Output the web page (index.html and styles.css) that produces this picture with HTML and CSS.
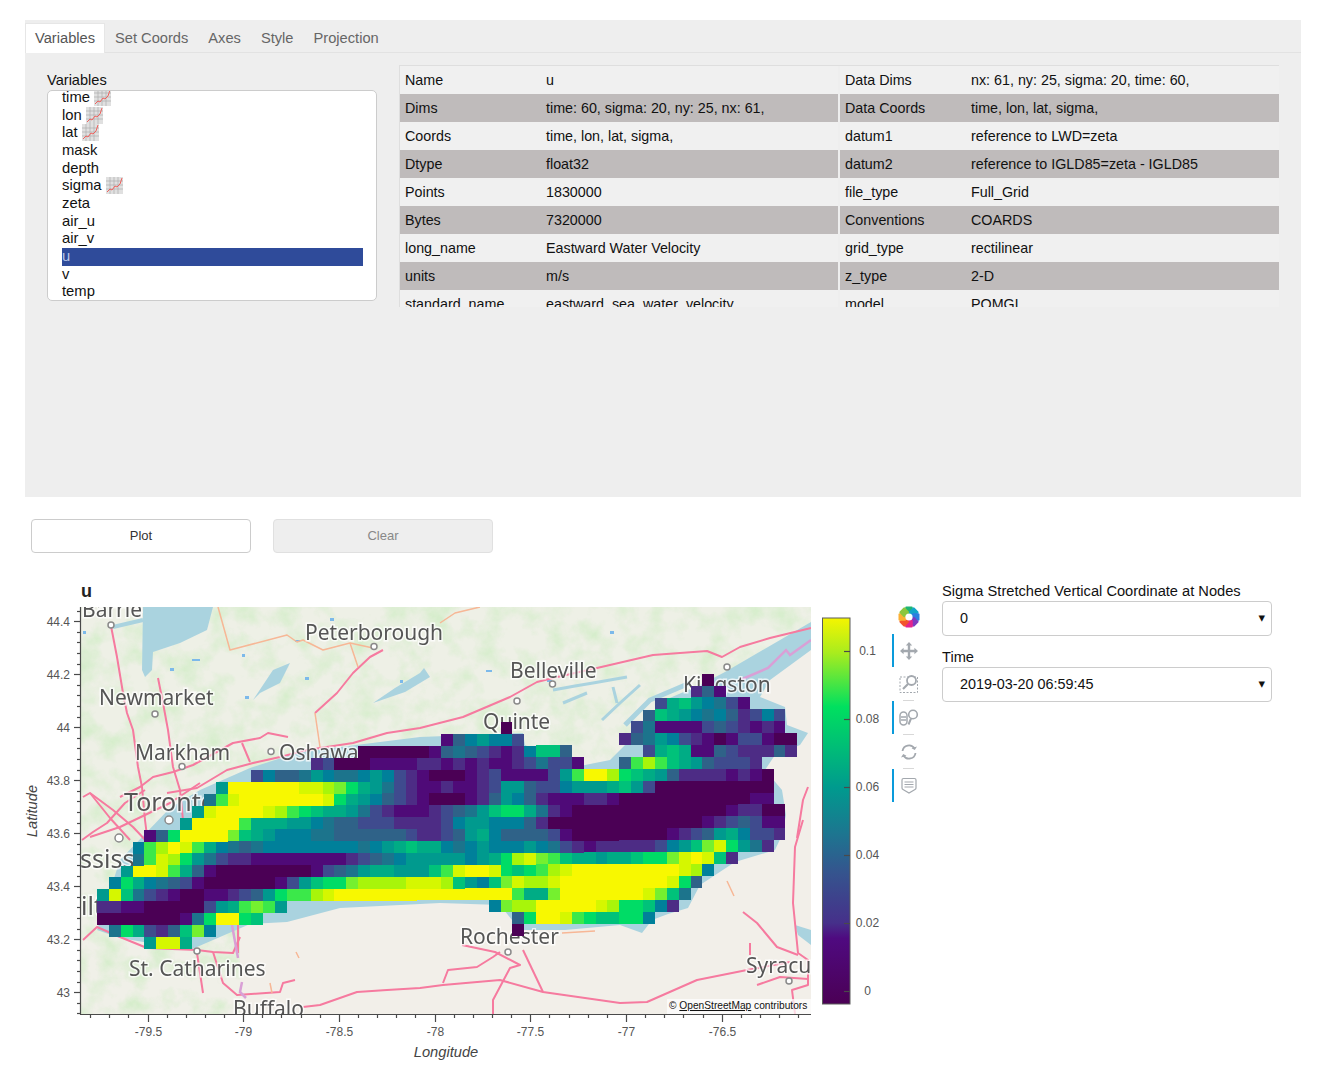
FILE: index.html
```html
<!DOCTYPE html>
<html lang="en">
<head>
  <meta charset="UTF-8">
  <meta name="viewport" content="width=device-width, initial-scale=1">
  <title>Psy View</title>
  <link rel="stylesheet" href="styles.css">
</head>

<body>

  <svg class="defs" width="0" height="0">
    <symbol id="chart" viewBox="0 0 17 17">
      <rect width="17" height="17" fill="#e0e0e0"/>
      <path d="M0 4h17M0 8h17M0 12h17M4 0v17M8 0v17M12 0v17" stroke="#adadad" stroke-width="0.7"/>
      <path d="M1 15l3-3 2 1 3-4 2 1 3-3 2-6" fill="none" stroke="#f0605c" stroke-width="1"/>
    </symbol>
  </svg>

  <div class="panel">
    <div class="tabs">
      <div class="tab active">Variables</div>
      <div class="tab">Set Coords</div>
      <div class="tab">Axes</div>
      <div class="tab">Style</div>
      <div class="tab">Projection</div>
    </div>

    <div class="panel-body">
      <div class="var-box">
        <div class="var-label">Variables</div>
        <div class="var-list">
          <ul>
            <li>time <svg class="chart"><use href="#chart"/></svg></li>
            <li>lon <svg class="chart"><use href="#chart"/></svg></li>
            <li>lat <svg class="chart"><use href="#chart"/></svg></li>
            <li>mask</li>
            <li>depth</li>
            <li>sigma <svg class="chart"><use href="#chart"/></svg></li>
            <li>zeta</li>
            <li>air_u</li>
            <li>air_v</li>
            <li class="selected">u</li>
            <li>v</li>
            <li>temp</li>
          </ul>
        </div>
      </div>

      <div class="info">
        <table class="info-left">
          <tr><td class="key">Name</td><td>u</td></tr>
          <tr><td class="key">Dims</td><td>time: 60, sigma: 20, ny: 25, nx: 61,</td></tr>
          <tr><td class="key">Coords</td><td>time, lon, lat, sigma,</td></tr>
          <tr><td class="key">Dtype</td><td>float32</td></tr>
          <tr><td class="key">Points</td><td>1830000</td></tr>
          <tr><td class="key">Bytes</td><td>7320000</td></tr>
          <tr><td class="key">long_name</td><td>Eastward Water Velocity</td></tr>
          <tr><td class="key">units</td><td>m/s</td></tr>
          <tr><td class="key">standard_name</td><td>eastward_sea_water_velocity</td></tr>
        </table>
        <table class="info-right">
          <tr><td class="key">Data Dims</td><td>nx: 61, ny: 25, sigma: 20, time: 60,</td></tr>
          <tr><td class="key">Data Coords</td><td>time, lon, lat, sigma,</td></tr>
          <tr><td class="key">datum1</td><td>reference to LWD=zeta</td></tr>
          <tr><td class="key">datum2</td><td>reference to IGLD85=zeta - IGLD85</td></tr>
          <tr><td class="key">file_type</td><td>Full_Grid</td></tr>
          <tr><td class="key">Conventions</td><td>COARDS</td></tr>
          <tr><td class="key">grid_type</td><td>rectilinear</td></tr>
          <tr><td class="key">z_type</td><td>2-D</td></tr>
          <tr><td class="key">model</td><td>POMGL</td></tr>
        </table>
      </div>
    </div>
  </div>

  <div class="buttons">
    <div class="btn">Plot</div>
    <div class="btn disabled">Clear</div>
  </div>

  <div class="plot-row">
    <svg class="plot" width="892" height="501" viewBox="0 578 892 501">
      <defs>
        <clipPath id="mapClip"><rect x="81" y="607" width="730" height="407"/></clipPath>
        <filter id="mottle" x="0" y="0" width="100%" height="100%" color-interpolation-filters="sRGB">
          <feTurbulence type="fractalNoise" baseFrequency="0.04" numOctaves="4" seed="7"/>
          <feColorMatrix type="matrix" values="0 0 0 0 0.84  0 0 0 0 0.93  0 0 0 0 0.80  2.4 0 0 0 -1"/>
          <feComposite in2="SourceGraphic" operator="in"/>
          <feMerge><feMergeNode in="SourceGraphic"/><feMergeNode/></feMerge>
        </filter>
        <filter id="soft"><feGaussianBlur stdDeviation="0.45"/></filter>
        <linearGradient id="cbar" x1="0" y1="0" x2="0" y2="1">
          <stop offset="0" stop-color="#f5f500"/>
          <stop offset="0.09" stop-color="#a9ec1e"/>
          <stop offset="0.23" stop-color="#00e05f"/>
          <stop offset="0.44" stop-color="#009a8e"/>
          <stop offset="0.56" stop-color="#1d7590"/>
          <stop offset="0.66" stop-color="#35548e"/>
          <stop offset="0.79" stop-color="#46308a"/>
          <stop offset="0.83" stop-color="#4f0a80"/>
          <stop offset="1" stop-color="#4b0055"/>
        </linearGradient>
      </defs>

      <text class="plot-title" x="81" y="597">u</text>

      <g clip-path="url(#mapClip)">
        <rect x="81" y="607" width="730" height="407" fill="#f2efe9"/>

        <!-- canadian side, greener than the us side -->
        <path filter="url(#mottle)" fill="#eef0e6" d="M81 607H811V640L770 680 760 700 640 760 81 960V607Z"/>
        <path filter="url(#mottle)" fill="#f0f0e8" d="M81 920L240 920 240 1014 81 1014Z"/>

        <!-- water -->
        <path fill="#aad3df" d="M97 930L120 860 170 808 200 790 250 768 300 752 420 737 523 733 525 745 570 768 610 760 625 745 650 725 665 700 700 685 725 672 811 622V650L770 680 760 697 785 707 787 725 808 733 800 745 775 755 765 770 782 790 786 815 782 835 775 850 735 862 700 885 688 908 668 914 652 920 642 933 620 925 565 930 520 930 500 905 440 903 340 908 287 922 250 924 190 950 120 938Z"/>
        <path fill="#aad3df" d="M143 607H213L207 630 180 643 153 652 152 670 145 677 142 670Z"/>
        <path fill="none" stroke="#aad3df" stroke-width="4" d="M113 627L143 620"/>
        <path fill="#aad3df" d="M253 700L273 670 290 663 280 683 260 693Z"/>
        <path fill="#aad3df" d="M373 703L395 688 420 673 424 668 430 677 405 692Z"/>
        <g fill="none" stroke="#aad3df">
          <path stroke-width="3" d="M553 690L575 686 593 683 627 677M563 703L587 693M613 687L617 703M602 720L620 703 640 685"/>
          <path stroke-width="5" d="M625 725L650 700 690 683"/>
        </g>
        <path fill="#aad3df" d="M795 925L811 930V945L798 935Z"/>
        <path fill="#7cb9ea" d="M192 659h8v2h-8ZM170 668h4v3h-4ZM330 618h4v3h-4ZM486 670h6v2h-6ZM610 631h4v3h-4ZM242 654h3v3h-3ZM305 677h4v3h-4ZM547 680h5v2h-5ZM83 631h3v3h-3ZM245 696h4v3h-4ZM400 680h3v3h-3ZM295 640h5v2h-5Z"/>

        <!-- roads -->
        <g fill="none" stroke="#f67a9f" stroke-width="2" stroke-linejoin="round" filter="url(#soft)">
          <path d="M111 626L117 657 123 693 127 713 133 730 138 767 142 787 145 820 150 860"/>
          <path d="M158 678L163 703 168 730 173 767 180 790 183 820"/>
          <path d="M83 797L90 793 110 818 130 840"/>
          <path d="M120 797L140 787 153 777 173 772 193 765 233 743 260 738 268 733 288 737"/>
          <path d="M167 793L197 788 227 770 253 763 280 757 307 750 353 743 387 733 420 728 463 717 510 697 537 682 553 678 597 668 653 655 707 651 722 657 740 647 770 638 811 628"/>
          <path d="M315 713L337 693 353 673 370 657 383 650"/>
          <path d="M82 840L93 832 107 823 125 803 145 790"/>
          <path d="M90 837L120 827 170 803 200 783"/>
          <path d="M90 793L113 810 133 827 150 845"/>
          <path d="M83 940L97 927 120 937 147 948 197 950 213 952 233 953 240 937"/>
          <path d="M197 953L203 993"/>
          <path d="M213 952L223 983 237 995 280 992 283 983 295 980"/>
          <path d="M238 923V953"/>
          <path d="M303 1007L320 1005 357 992 387 990 420 988 443 985 500 980 543 992 620 1003 647 1002 697 980 747 970 790 962"/>
          <path d="M462 945L495 952 520 965 510 968 493 1000 493 1014"/>
          <path d="M523 950L543 992"/>
          <path d="M443 983L448 970 477 967 493 957 500 952"/>
          <path d="M803 820L795 847 793 903 798 953 808 960 808 985 792 990 795 1014"/>
          <path d="M743 912L757 923 777 947 798 955"/>
          <path d="M750 943L750 955M757 985L780 977 808 979"/>
          <path d="M808 787L803 800 797 838"/>
          <path d="M242 743L250 762"/>
        </g>
        <g fill="none" stroke="#f7b796" stroke-width="1.5" stroke-linejoin="round" filter="url(#soft)">
          <path d="M218 607L230 650 287 635 297 642 303 640 323 650 350 643 373 648"/>
          <path d="M350 643L358 667"/>
          <path d="M315 713L320 747"/>
          <path d="M440 623L455 613 480 607"/>
          <path d="M727 881L734 896"/>
          <path d="M562 933L595 931"/>
          <path d="M296 952L299 958M270 983L272 993"/>
        </g>
        <g fill="none" stroke="#d9a0d6" stroke-width="2.5" filter="url(#soft)">
          <path d="M232 925L238 958"/>
          <path d="M242 982L240 992 246 998"/>
          <path d="M740 680L768 668 786 650 790 655 811 640"/>
        </g>

        <!-- cities -->
        <g fill="#fff" stroke="#8a8a8a" stroke-width="1.5">
          <circle cx="111" cy="625" r="3"/>
          <circle cx="374" cy="646.5" r="3"/>
          <circle cx="155" cy="714" r="3"/>
          <circle cx="182" cy="766.5" r="3"/>
          <circle cx="271" cy="751.5" r="3"/>
          <circle cx="169" cy="820" r="4"/>
          <circle cx="119" cy="838" r="4"/>
          <circle cx="552.5" cy="684" r="3"/>
          <circle cx="517" cy="701" r="3"/>
          <circle cx="727" cy="667" r="3"/>
          <circle cx="508" cy="952" r="3"/>
          <circle cx="197" cy="951" r="3"/>
          <circle cx="789" cy="981" r="3"/>
        </g>

        <g class="places" filter="url(#soft)">
          <text x="82" y="617">Barrie</text>
          <text x="305" y="640">Peterborough</text>
          <text x="510" y="678">Belleville</text>
          <text x="99" y="705">Newmarket</text>
          <text x="483" y="729">Quinte</text>
          <text x="135" y="760">Markham</text>
          <text x="279" y="760">Oshawa</text>
          <text x="683" y="692">Kingston</text>
          <text class="big" x="124" y="811">Toronto</text>
          <text class="big" x="80" y="868">ssissauga</text>
          <text class="big" x="81" y="915">ilton</text>
          <text x="460" y="944">Rochester</text>
          <text x="129" y="976">St. Catharines</text>
          <text x="233" y="1016">Buffalo</text>
          <text x="746" y="973">Syracuse</text>
        </g>

        <g id="mesh"></g>

        <rect x="667" y="999" width="144" height="15" fill="#fff" fill-opacity="0.7"/>
        <text class="attr" x="669" y="1009">© <tspan text-decoration="underline">OpenStreetMap</tspan> contributors</text>
      </g>

      <g id="axes"></g>
      <text class="axis-label" x="446" y="1057" text-anchor="middle">Longitude</text>
      <text class="axis-label" text-anchor="middle" transform="translate(37 811) rotate(-90)">Latitude</text>

      <rect x="822.5" y="618" width="27.5" height="386" fill="url(#cbar)" stroke="#5c5c5c" stroke-width="1"/>
      <g id="cbarTicks"></g>
    </svg>

    <div class="toolbar">
      <svg class="logo" width="22" height="22" viewBox="-11 -11 22 22">
        <g id="logoPetals"></g>
        <circle r="3.6" fill="#fff"/>
      </svg>
      <div class="tool on">
        <svg width="18" height="18" viewBox="0 0 18 18"><path fill="#a3a8ae" d="M9 0l3.2 3.6H10.2V7.8H14.4V5.8L18 9l-3.6 3.2V10.2H10.2V14.4H12.2L9 18 5.800 14.400H7.800V10.200H3.600V12.200L0 9l3.600-3.200V7.800H7.800V3.600H5.800Z"/></svg>
      </div>
      <div class="tool">
        <svg width="20" height="20" viewBox="0 0 20 20">
          <rect x="1" y="3" width="17.500" height="15.500" fill="none" stroke="#a3a8ae" stroke-dasharray="2 1.500"/>
          <circle cx="12.500" cy="6.500" r="4.500" fill="#fff" stroke="#a3a8ae" stroke-width="1.800"/>
          <path d="M9 10L4 15" stroke="#a3a8ae" stroke-width="2.200"/>
        </svg>
      </div>
      <div class="sep"></div>
      <div class="tool on">
        <svg width="20" height="18" viewBox="0 0 20 18">
          <rect x="1" y="3" width="7" height="13" rx="3.500" fill="none" stroke="#a3a8ae" stroke-width="1.500"/>
          <path d="M2 8h5M2 11h5" stroke="#a3a8ae" stroke-width="1.500"/>
          <circle cx="14" cy="5.500" r="4.300" fill="none" stroke="#a3a8ae" stroke-width="1.600"/>
          <path d="M12 9.500L9.500 15.500" stroke="#a3a8ae" stroke-width="2"/>
        </svg>
      </div>
      <div class="sep"></div>
      <div class="tool">
        <svg width="18" height="18" viewBox="0 0 18 18" fill="none" stroke="#a3a8ae" stroke-width="1.800">
          <path d="M2.500 8A6.500 6.500 0 0 1 14.500 5.500"/>
          <path d="M15.500 10A6.500 6.500 0 0 1 3.500 12.500"/>
          <path d="M17 3.500L14.800 7 11.500 5.200ZM1 14.500L3.200 11 6.500 12.800Z" fill="#a3a8ae" stroke="none"/>
        </svg>
      </div>
      <div class="sep"></div>
      <div class="tool on">
        <svg width="16" height="18" viewBox="0 0 16 18" fill="none" stroke="#a3a8ae">
          <path d="M2.500 1.500H13.500Q15 1.500 15 3V11Q15 12 14 12.500L8 16 2 12.500Q1 12 1 11V3Q1 1.500 2.500 1.500Z" stroke-width="1.200"/>
          <path d="M3.500 5H12.500M3.500 7.500H12.500M3.500 10H12.500" stroke-width="1.200"/>
        </svg>
      </div>
    </div>

    <div class="widgets">
      <div class="field">
        <label class="field-label">Sigma Stretched Vertical Coordinate at Nodes</label>
        <div class="select"><span>0</span><span class="caret">▾</span></div>
      </div>
      <div class="field">
        <label class="field-label">Time</label>
        <div class="select"><span>2019-03-20 06:59:45</span><span class="caret">▾</span></div>
      </div>
    </div>
  </div>

  <script src="app.js"></script>

</body>
</html>
```

FILE: styles.css
```css
* { margin: 0; padding: 0; box-sizing: border-box; }

body {
  font-family: 'Liberation Sans', Arial, sans-serif;
  font-size: 14.3px;
  color: #111;
  background: white;
  padding-top: 20px;
}

.defs { position: absolute; }

.panel {
  margin-left: 25px;
  width: 1276px;
  height: 477px;
  background: #eeeeee;
}

.tabs {
  display: flex;
  height: 33px;
  padding: 3px 0 0 0;
  border-bottom: 1px solid #e2e2e2;
}

.tab {
  padding: 0 10px;
  line-height: 30px;
  color: #666;
  height: 30px;
  font-size: 14.67px;
}

.tab.active {
  background: white;
  color: #555;
  border: 1px solid #e6e6e6;
  border-bottom: none;
  line-height: 28px;
  padding: 0 9px;
}

.panel-body {
  display: flex;
  align-items: flex-start;
  padding: 12px 22px 0 22px;
}

.var-box {
  width: 330px;
  margin-right: 22px;
}

.var-label {
  padding-top: 6px;
  line-height: 19px;
  height: 25px;
  font-size: 14.6px;
}

.var-list {
  height: 211px;
  background: white;
  border: 1px solid #cccccc;
  border-radius: 5px;
  overflow: hidden;
}

.var-list ul {
  list-style: none;
  margin: -2px 13px 0 14px;
}

.var-list li {
  height: 17.67px;
  line-height: 17.67px;
  white-space: nowrap;
  font-size: 14.8px;
}

.var-list li.selected {
  background: #2f4b9a;
  color: #b9c6e6;
}

.chart {
  width: 17px;
  height: 17px;
  vertical-align: -4px;
}

.info {
  display: flex;
  width: 880px;
  height: 242px;
  overflow: hidden;
  border-top: 1px solid #dedede;
  border-left: 1px solid #dedede;
  flex-shrink: 0;
}

.info table {
  border-collapse: collapse;
  table-layout: fixed;
  height: 252px;
}

.info-left { width: 438px; margin-right: 2px; }
.info-right { width: 439px; }
.info-left .key { width: 141px; }
.info-right .key { width: 126px; }

.info td {
  height: 28px;
  padding: 0 5px;
  white-space: nowrap;
  background: #f0f0f0;
}

.info tr:nth-child(even) td {
  background: #bfbbbb;
}

.buttons {
  display: flex;
  gap: 22px;
  padding: 22px 0 0 31px;
}

.btn {
  width: 220px;
  height: 34px;
  line-height: 32px;
  text-align: center;
  font-size: 13px;
  border: 1px solid #cccccc;
  border-radius: 4px;
  background: white;
  color: #333;
}

.btn.disabled {
  background: #eeeeee;
  border-color: #e0e0e0;
  color: #888;
}

.plot-row {
  display: flex;
  align-items: flex-start;
  margin-top: 25px;
}

.plot { display: block; flex-shrink: 0; }

.plot text { font-family: 'Liberation Sans', Arial, sans-serif; }

.plot .plot-title {
  font-size: 18px;
  font-weight: bold;
  fill: #222;
}

.plot .places text {
  font-family: 'Noto Sans', sans-serif;
  font-size: 21px;
  fill: #555555;
  stroke: #ffffff;
  stroke-width: 3px;
  stroke-opacity: 0.75;
  paint-order: stroke;
}

.plot .places text.big { font-size: 25px; }

.plot .tick-label {
  font-size: 12px;
  fill: #555;
}

.plot .axis-label {
  font-size: 14.7px;
  font-style: italic;
  fill: #444;
}

.plot .attr {
  font-size: 10.2px;
  fill: #111;
}

.toolbar {
  width: 33px;
  display: flex;
  flex-direction: column;
  flex-shrink: 0;
  padding-top: 28px;
  margin-right: 17px;
}

.logo {
  display: block;
  margin: 0 0 6px 6px;
}

.tool {
  height: 33px;
  display: flex;
  align-items: center;
  justify-content: center;
  border-left: 2px solid transparent;
  padding-right: 2px;
}

.tool.on { border-left-color: #0a9bdb; }

.sep {
  height: 1px;
  margin: 0 11px;
  background: #d8d8d8;
}

.widgets {
  width: 330px;
}

.field-label {
  display: block;
  height: 23px;
  line-height: 26px;
  font-size: 14.65px;
}

.field { margin-bottom: 8px; }

.select {
  height: 35px;
  display: flex;
  align-items: center;
  justify-content: space-between;
  padding: 0 6px 2px 17px;
  border: 1px solid #cccccc;
  border-radius: 4px;
  background: white;
  font-size: 14.4px;
}

.caret { font-size: 13px; font-family: 'DejaVu Sans', sans-serif; }
```

FILE: app.js
```js
// level per cell, 0 = darkest purple .. f = yellow. [first column, cells], space = no data
const meshRows = [
  [51, "0"],
  [50, "241"],
  [47, "38976531"],
  [46, "498765642363"],
  [34, "0          3511113432121"],
  [29, "1467663        245763210133100"],
  [22, "0000001" + "45432126994" + "      " + "3898114322242"],
  [18, "23000111122" + "121211235331" + "   " + "4bdb98743332"],
  [13, "3644576556763210" + "0012311113" + "7bffda9874" + "22221210"],
  [10, "7ffffffeedca8753211" + "2112377433" + "6777897300" + "00000000"],
  [9, "5befffffffea87643210" + "001247642111221" + "00000000000" + "11"],
  [8, "7effffedba988753211" + "12" + "34579aa8521" + "0000000000000" + "12200"],
  [7, "7ffffb888776544333" + "2222" + "367766642" + "0000000000000" + "1234311"],
  [4, "14affffc98766655444444322" + "34786444431" + "00000000" + "1234786332"],
  [3, "6bdfeb865456666666656789" + "88" + "6567666765321222223679cea752"],
  [3, "5beda7532211111111234567" + "77" + "7767" + "8adecb98878" + "89aace" + "fe92"],
  [2, "7ffeb8410000000013457887779" + "bef" + "fea9abde" + "fffffffff" + "ed6"],
  [1, "6a865431000000" + "1379aacddddeee" + "d9769cedde" + "fffffffff" + "ea4"],
  [0, "7e95321001" + "1234" + "7abbde" + "fffffffffffffff" + "b88c" + "fffffff" + "ec95"],
  [0, "2211000003" + "78bcb7" + "                 " + "6cddfffffedaa962"],
  [0, "0000000" + "15affa9" + "                     " + "4affeba99aa6"],
  [1, "5a83249c6" + "                         " + "0"],
  [4, "7ee8"]
];

const levelColors = {
  0: "#4b0055", 1: "#4f0a78", 2: "#4d2c85", 3: "#3f4b8e", 4: "#2f6288", 5: "#1c748c",
  6: "#00809a", 7: "#009a8e", 8: "#00ac85", 9: "#00c27a", a: "#00dc66", b: "#3be84a",
  c: "#75f02f", d: "#a8f50a", e: "#d5f700", f: "#f8f800"
};

const NS = "http://www.w3.org/2000/svg";

function add(parent, tag, attrs, text) {
  const el = document.createElementNS(NS, tag);
  Object.keys(attrs).forEach(function(k) { el.setAttribute(k, attrs[k]); });
  if (text) el.textContent = text;
  parent.appendChild(el);
  return el;
}

// heatmap cells, the mesh leans slightly over its width
const mesh = document.getElementById("mesh");
const cellW = 11.87, cellH = 11.9;
meshRows.forEach(function(row, r) {
  const start = row[0], cells = row[1];
  for (let i = 0; i < cells.length; i++) {
    if (cells[i] === " ") continue;
    const c = start + i;
    const shift = (30 - c) * 0.03;
    const x1 = Math.round(97 + c * cellW), x2 = Math.round(97 + (c + 1) * cellW);
    const y1 = Math.round(674.3 + r * cellH + shift), y2 = Math.round(674.3 + (r + 1) * cellH + shift);
    add(mesh, "rect", { x: x1, y: y1, width: x2 - x1, height: y2 - y1, fill: levelColors[cells[i]] });
  }
});

// axes
const axes = document.getElementById("axes");
const line = { stroke: "#4a4a4a", "stroke-width": 1.2 };
add(axes, "line", Object.assign({ x1: 80.5, x2: 80.5, y1: 607, y2: 1014.5 }, line));
add(axes, "line", Object.assign({ x1: 80, x2: 811, y1: 1014.5, y2: 1014.5 }, line));

const yLabels = ["44.4", "44.2", "44", "43.8", "43.6", "43.4", "43.2", "43"];
for (let k = -1; k < 40; k++) {
  const y = Math.floor(621.7 + k * 10.6) + 0.5;
  if (y < 607 || y > 1014) continue;
  const major = (k % 5 === 0);
  add(axes, "line", Object.assign({ x1: major ? 74 : 77, x2: 81, y1: y, y2: y }, line));
  if (major) {
    const lab = add(axes, "text", { x: 70, y: y + 4.5, "text-anchor": "end" }, yLabels[k / 5]);
    lab.setAttribute("class", "tick-label");
  }
}

const xLabels = ["-79.5", "-79", "-78.5", "-78", "-77.5", "-77", "-76.5"];
for (let k = -3; k < 35; k++) {
  const x = Math.floor(148 + k * 19.14) + 0.5;
  if (x < 81 || x > 811) continue;
  const major = (k % 5 === 0);
  add(axes, "line", Object.assign({ x1: x, x2: x, y1: 1014, y2: major ? 1022 : 1018 }, line));
  if (major) {
    const lab = add(axes, "text", { x: x, y: 1036, "text-anchor": "middle" }, xLabels[k / 5]);
    lab.setAttribute("class", "tick-label");
  }
}

// colorbar ticks
const cbarTicks = document.getElementById("cbarTicks");
["0.1", "0.08", "0.06", "0.04", "0.02", "0"].forEach(function(label, i) {
  const y = 651 + i * 68;
  add(cbarTicks, "line", Object.assign({ x1: 844, x2: 850, y1: y + 0.5, y2: y + 0.5 }, line));
  const t = add(cbarTicks, "text", { x: 867.5, y: y + 4, "text-anchor": "middle" }, label);
  t.setAttribute("class", "tick-label");
});

// bokeh logo
const petals = document.getElementById("logoPetals");
["#1fb574", "#12a5c9", "#2b7fe0", "#7d3bc0", "#e4248e", "#f2542d", "#fbb034", "#8cc63f"].forEach(function(color, i) {
  add(petals, "rect", {
    x: -3.8, y: -10.5, width: 7.6, height: 7.6, rx: 1.2, fill: color,
    transform: "rotate(" + (i * 45) + ")"
  });
});
```
